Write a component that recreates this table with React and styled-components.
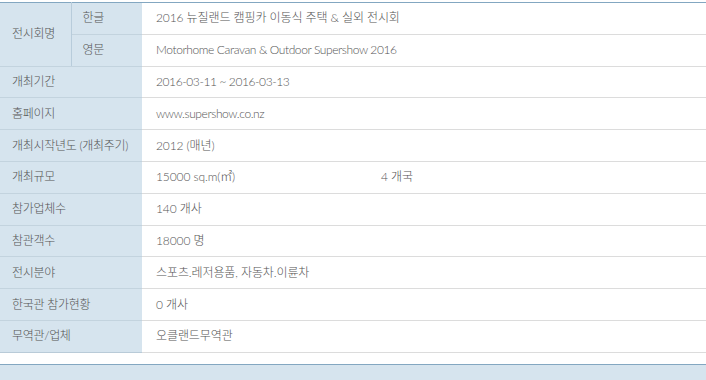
import React from "react";
import styled, { createGlobalStyle } from "styled-components";

const Global = createGlobalStyle`
  html, body { margin: 0; padding: 0; background: #fff; }
  body { font-family: Lato, "Noto Sans CJK KR", "Noto Sans", sans-serif; }
`;

const Wrap = styled.div`
  width: 706px;
  height: 380px;
  overflow: hidden;
  padding-top: 2px;
  box-sizing: border-box;
`;

const Table = styled.table`
  width: 100%;
  border-collapse: collapse;
  border-top: 1px solid #83a7c1;
  font-size: 12px;
  line-height: 16px;
  color: #555;
  font-weight: 300;
  table-layout: fixed;
`;

const Label = styled.th`
  background: #d6e4ee;
  font-weight: 300;
  text-align: left;
  padding: 0 0 0 ${(p) => (p.$sub ? "11px" : "12px")};
  height: 30.8px;
  box-sizing: border-box;
  border-bottom: 1px solid ${(p) => (p.$last ? "#b9cbd8" : "#c3d3de")};
  border-right: ${(p) => (p.$divider ? "1px solid #b8ccdb" : "none")};
  white-space: nowrap;
  letter-spacing: -0.3px;
`;

const Value = styled.td`
  padding: 0 0 0 14px;
  height: 30.8px;
  border-bottom: 1px solid #dcdcdc;
  white-space: nowrap;
  letter-spacing: ${(p) => (p.$latin ? "-0.4px" : "-0.1px")};
`;

const Split = styled.div`
  display: flex;
  & > span:first-child { width: 225px; }
`;

const Footer = styled.div`
  margin-top: 11px;
  border-top: 1px solid #83a7c1;
  background: #d6e4ee;
  height: 40px;
`;

const rows = [
  ["개최기간", "2016-03-11 ~ 2016-03-13", true],
  ["홈페이지", "www.supershow.co.nz", true],
  ["개최시작년도 (개최주기)", "2012 (매년)"],
  ["개최규모", ["15000 sq.m(㎡)", "4 개국"]],
  ["참가업체수", "140 개사"],
  ["참관객수", "18000 명"],
  ["전시분야", "스포츠.레저용품, 자동차.이륜차"],
  ["한국관 참가현황", "0 개사"],
  ["무역관/업체", "오클랜드무역관"],
];

export default function App() {
  return (
    <Wrap>
      <Global />
      <Table>
        <colgroup>
          <col style={{ width: 71 }} />
          <col style={{ width: 71 }} />
          <col />
        </colgroup>
        <tbody>
          <tr>
            <Label rowSpan={2} $divider>전시회명</Label>
            <Label $sub>한글</Label>
            <Value>2016 뉴질랜드 캠핑카 이동식 주택 &amp; 실외 전시회</Value>
          </tr>
          <tr>
            <Label $sub>영문</Label>
            <Value $latin>Motorhome Caravan &amp; Outdoor Supershow 2016</Value>
          </tr>
          {rows.map(([k, v, latin], i) => (
            <tr key={k}>
              <Label colSpan={2} $last={i === rows.length - 1}>{k}</Label>
              <Value $latin={latin}>
                {Array.isArray(v) ? (
                  <Split>
                    <span>{v[0]}</span>
                    <span>{v[1]}</span>
                  </Split>
                ) : (
                  v
                )}
              </Value>
            </tr>
          ))}
        </tbody>
      </Table>
      <Footer />
    </Wrap>
  );
}
